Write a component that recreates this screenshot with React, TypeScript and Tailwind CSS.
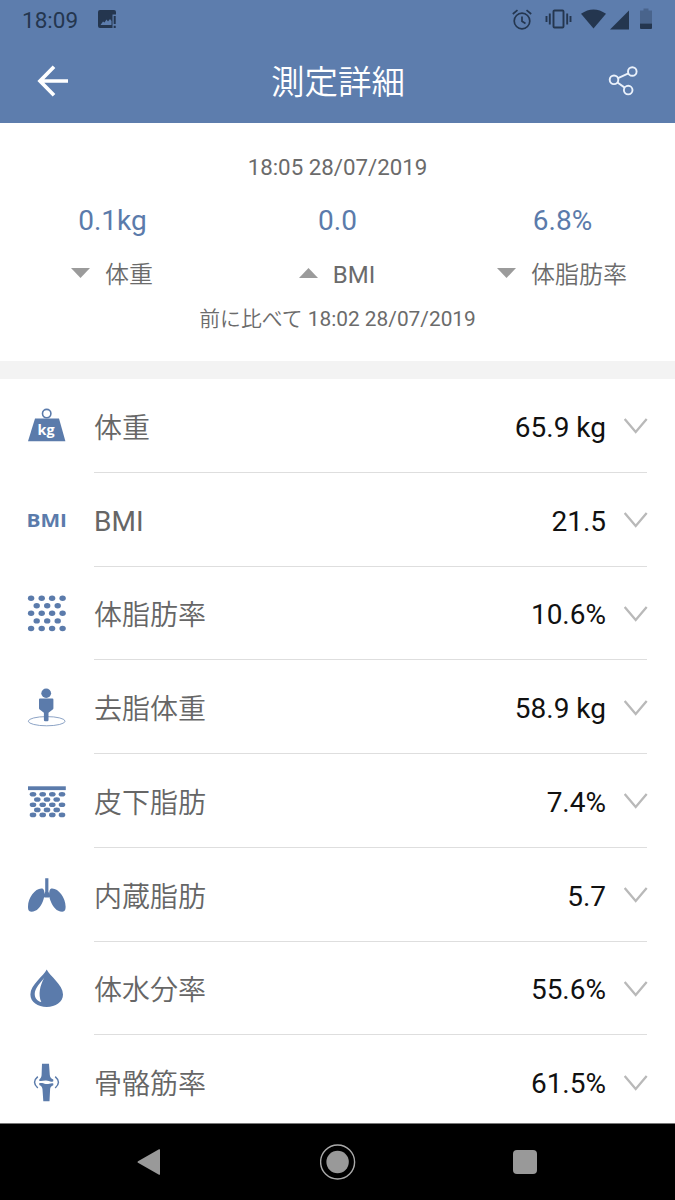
import React from 'react';

interface Measurement {
  label: string;
  value: string;
  icon: React.ReactNode;
}

interface Change {
  label: string;
  value: string;
  direction: 'up' | 'down';
}

interface IconProps {
  children: React.ReactNode;
}

const RowIcon: React.FC<IconProps> = ({ children }) => (
  <svg width="40" height="40" viewBox="0 0 40 40" fill="#5b7bab" className="shrink-0">
    {children}
  </svg>
);

const WeightIcon = () => (
  <RowIcon>
    <circle cx="19.7" cy="7.6" r="4.2" fill="none" stroke="#5b7bab" strokeWidth="1.6" />
    <path d="M8 12.4h24L38.4 35.2H1z" />
    <text x="10.6" y="29" fill="#fff" fontSize="14" fontWeight="700" fontFamily="Open Sans, sans-serif" textLength="17" lengthAdjust="spacingAndGlyphs">kg</text>
  </RowIcon>
);

const BmiIcon = () => (
  <RowIcon>
    <text x="-0.5" y="26.6" fontSize="18.5" fontWeight="750" fontFamily="Open Sans, sans-serif" textLength="40.5" lengthAdjust="spacingAndGlyphs">BMI</text>
  </RowIcon>
);

const BodyFatIcon = () => (
  <RowIcon>
    {[5.3, 12.7, 20.3, 27.9, 35.5].map((y, i) =>
      (i % 2 === 0 ? [4.1, 14.7, 25.1, 35.6] : [9.7, 20.2, 30.7]).map((x) => (
        <ellipse key={`${x}-${y}`} cx={x} cy={y} rx="3.2" ry="2.7" />
      ))
    )}
  </RowIcon>
);

const LeanMassIcon = () => (
  <RowIcon>
    <ellipse cx="19.7" cy="34.2" rx="18.4" ry="4.6" fill="none" stroke="#7f98be" strokeWidth="0.9" />
    <ellipse cx="19.2" cy="6.2" rx="4.9" ry="4.7" />
    <path d="M13 11.6h12.4q1 0 1 1v8.6q0 .8-.7 1.3l-4.2 3.2v7.4q0 1.2-1.2 1.2h-2.2q-1.2 0-1.2-1.2v-7.4l-4.2-3.2q-.7-.5-.7-1.3v-8.6q0-1 1-1z" />
  </RowIcon>
);

const SubcutaneousIcon = () => (
  <RowIcon>
    <rect x="1" y="5.3" width="37.8" height="3.8" />
    {[13.2, 18.5, 23.7, 28.9, 33.9].map((y, i) =>
      (i % 2 === 0 ? [6, 15.7, 25.3, 35] : [10.3, 20, 29.7]).map((x) => (
        <ellipse key={`${x}-${y}`} cx={x} cy={y} rx="3.3" ry="2.3" />
      ))
    )}
  </RowIcon>
);

const VisceralIcon = () => (
  <RowIcon>
    <path d="M18.2 3.3h3.2v13.5l2.2 4.4-1.6 1.2h-4.4L16 21.2l2.2-4.4z" />
    <path d="M16.2 13.9C17.6 15.5 18.2 20.5 16 26 13.6 32 10 36.7 4.4 36.7 1.6 36.7 1 34.4 1 31.5 1 22 9.5 11.8 16.2 13.9z" />
    <path d="M23.4 13.9C22 15.5 21.4 20.5 23.6 26 26 32 29.6 36.7 35.2 36.7 38 36.7 38.6 34.4 38.6 31.5 38.6 22 30.1 11.8 23.4 13.9z" />
  </RowIcon>
);

const WaterIcon = () => (
  <RowIcon>
    <path d="M19.7 1.5C22.5 8 36 16.5 36 26.4 36 34 28.5 38.9 19.7 38.9S3.4 34 3.4 26.4C3.4 16.5 16.9 8 19.7 1.5z" />
    <path fill="#fff" d="M17.4 9.4C14.5 14 7.6 19.5 7.7 26c.1 4.2 2.7 7.2 6.6 8.1-3.4-8-1.4-16.6 3.1-24.7z" />
  </RowIcon>
);

const BoneIcon = () => (
  <RowIcon>
    <path d="M15 1.7h7l.8 11.2c.2 2.2 1.3 3.4 3.5 4.5v1.8c-2.6 1.6-4.6-.8-7.6-.6-2.6.1-4.4.9-6.4.3v-1.5c1.5-1.2 2.2-2.7 2.3-4.5z" />
    <path d="M12.3 21.1c2.6-.5 4.3.4 6.4.9 2.7.6 4.5-1.2 7.6-.6v1.9c-2.3.9-3.1 2.2-3.2 4.2L22.5 39.2h-6.2l-.8-11.7c-.1-2.2-1.1-3.5-3.2-4.4z" />
    <path d="M10.8 14.6q-6.5 5.6 0 11.4M28.2 14.6q6.5 5.6 0 11.4" fill="none" stroke="#5b7bab" strokeWidth="1.5" />
  </RowIcon>
);

const changes: Change[] = [
  { label: '体重', value: '0.1kg', direction: 'down' },
  { label: 'BMI', value: '0.0', direction: 'up' },
  { label: '体脂肪率', value: '6.8%', direction: 'down' },
];

const measurements: Measurement[] = [
  { label: '体重', value: '65.9 kg', icon: <WeightIcon /> },
  { label: 'BMI', value: '21.5', icon: <BmiIcon /> },
  { label: '体脂肪率', value: '10.6%', icon: <BodyFatIcon /> },
  { label: '去脂体重', value: '58.9 kg', icon: <LeanMassIcon /> },
  { label: '皮下脂肪', value: '7.4%', icon: <SubcutaneousIcon /> },
  { label: '内蔵脂肪', value: '5.7', icon: <VisceralIcon /> },
  { label: '体水分率', value: '55.6%', icon: <WaterIcon /> },
  { label: '骨骼筋率', value: '61.5%', icon: <BoneIcon /> },
];

const StatusBar = () => (
  <div className="flex h-10 items-center pl-[22px] pr-[23px] text-[#24364f]">
    <span className="text-[22.5px] leading-none">18:09</span>
    <svg width="19" height="19" viewBox="0 0 19 19" className="ml-5 -mt-0.5" fill="currentColor">
      <path fillRule="evenodd" d="M2 0h14q2 0 2 2v2.500h-3.500v13.500H2q-2 0-2-2V2Q0 0 2 0zM2.500 15H13.500V11L12 9 10 11.500 8.500 9.500 6.500 12.500 5 11.500z" />
      <path d="M15.700 6h2v8h-2zM15.700 15.800h2v2.200h-2z" />
    </svg>
    <div className="ml-auto flex items-center">
      <svg width="20" height="21" viewBox="0 0 20 21" fill="none" stroke="currentColor" strokeWidth="1.7" className="-mt-0.5">
        <circle cx="10" cy="12" r="7.8" />
        <path d="M10 7.5v4.8l3.5 2.2M.8 5 5.5 1.200M19.200 5l-4.700-3.800" />
      </svg>
      <svg width="27" height="20" viewBox="0 0 27 20" className="ml-[13px] -mt-[3px]" fill="none" stroke="currentColor" strokeWidth="1.9">
        <rect x="8.500" y="1.500" width="10" height="17" rx="1" />
        <path d="M1.500 7v6M4.800 4.500v11M22.200 4.500v11M25.500 7v6" />
      </svg>
      <svg width="25" height="20" viewBox="0 0 25 20" className="ml-[9px] -mt-[3px]" fill="currentColor">
        <path d="M0 4.800Q12.500-3.800 25 4.800L12.500 19.500z" />
      </svg>
      <svg width="19" height="20" viewBox="0 0 19 20" className="ml-[4px] -mt-px" fill="currentColor">
        <path d="M19 .5v19H0z" />
      </svg>
      <svg width="12" height="22" viewBox="0 0 12 22" className="ml-[11px] -mt-0.5" fill="currentColor">
        <path opacity=".35" d="M3.500.500h5v2H12V15.500H0V2.500h3.500z" />
        <path d="M0 15.500h12V20q0 1-1 1H1q-1 0-1-1z" />
      </svg>
    </div>
  </div>
);

const Header = () => (
  <header className="h-[122.5px] shrink-0 bg-[#5d7dad]">
    <StatusBar />
    <div className="flex h-[81px] items-center justify-between pl-[37px] pr-[37px] text-white">
      <svg width="32" height="32" viewBox="0 0 32 32" fill="none" stroke="currentColor" strokeWidth="3.7">
        <path d="M31 16H3.500M17 1.800 3 16 17 30.200" />
      </svg>
      <h1 className="-ml-px pt-[5px] text-[33.5px] leading-none font-[350]">測定詳細</h1>
      <svg width="30" height="30" viewBox="0 0 30 30" fill="none" stroke="#eaf1fb" strokeWidth="1.9">
        <circle cx="24.3" cy="5.5" r="4.3" />
        <circle cx="6" cy="13.8" r="4.3" />
        <circle cx="20.2" cy="24.1" r="4.3" />
        <path d="m10.100 12.100 10.300-4.700M9.500 16.500l7.200 5.100" />
      </svg>
    </div>
  </header>
);

const Summary = () => (
  <section className="flex h-[238px] shrink-0 flex-col items-center pt-[30px] text-[#6b6b6b]">
    <p className="text-[22.3px] leading-7">18:05 28/07/2019</p>
    <div className="mt-[22px] grid w-full grid-cols-3">
      {changes.map((change) => (
        <div key={change.label} className="flex flex-col items-center">
          <span className="text-[28px] leading-9 text-[#5b7bab]">{change.value}</span>
          <div className="mt-[18px] flex items-center gap-[15px] pr-px">
            <svg width="19" height="10" viewBox="0 0 19 10" fill="#9b9b9b" className="-mt-1">
              <path d={change.direction === 'up' ? 'M0 10 9.500 0 19 10z' : 'M0 0h19L9.500 10z'} />
            </svg>
            <span className={change.label === 'BMI' ? 'text-[24px] leading-9' : 'text-[24px] leading-9 font-[350]'}>
              {change.label}
            </span>
          </div>
        </div>
      ))}
    </div>
    <p className="mt-[12px] text-[20.85px] leading-7">
      <span className="font-[350]">前に比べて</span> 18:02 28/07/2019
    </p>
  </section>
);

const MeasurementRow: React.FC<Measurement> = ({ label, value, icon }) => (
  <li className="flex h-[93.75px] shrink-0 items-center pl-[27px] pr-7">
    {icon}
    <div className="ml-[27px] flex h-full flex-1 items-center border-b border-[#dedede] pt-[2px]">
      <span className={label === 'BMI' ? 'pt-[3px] text-[28px] leading-none text-[#666]' : 'pt-[5px] text-[28px] leading-none font-[350] text-[#666]'}>
        {label}
      </span>
      <span className="ml-auto pt-[3px] text-[28px] leading-none text-[#111]">{value}</span>
      <svg width="24" height="16" viewBox="0 0 24 16" className="ml-[18px] -mr-px" fill="none" stroke="#b9b9b9" strokeWidth="2.3">
        <path d="m.7 1 11 13 11-13" />
      </svg>
    </div>
  </li>
);

const NavBar = () => (
  <nav className="grid h-[77px] shrink-0 grid-cols-[1fr_36px_1fr] items-center border-t border-[#777] bg-black">
    <svg width="24" height="26" viewBox="0 0 24 26" fill="#999" className="ml-[137px]">
      <path d="M22 .3q1-.5 1 .7v24q0 1.200-1 .7L1 13.800q-1-.8 0-1.600z" />
    </svg>
    <svg width="36" height="36" viewBox="0 0 36 36">
      <circle cx="17.6" cy="18" r="17" fill="none" stroke="#aaa" strokeWidth="1.4" />
      <circle cx="17.6" cy="18" r="11.2" fill="#999" />
    </svg>
    <div className="ml-[157px] size-6 rounded-sm bg-[#999]" />
  </nav>
);

export default function App() {
  return (
    <div lang="ja" className="flex h-[1200px] w-[675px] flex-col overflow-hidden bg-white font-[Roboto,'Noto_Sans_CJK_JP',sans-serif]">
      <Header />
      <Summary />
      <div className="h-[18.5px] shrink-0 bg-[#f3f3f3]" />
      <ul className="flex min-h-0 flex-1 flex-col overflow-hidden">
        {measurements.map((item) => (
          <MeasurementRow key={item.label} {...item} />
        ))}
      </ul>
      <NavBar />
    </div>
  );
}
